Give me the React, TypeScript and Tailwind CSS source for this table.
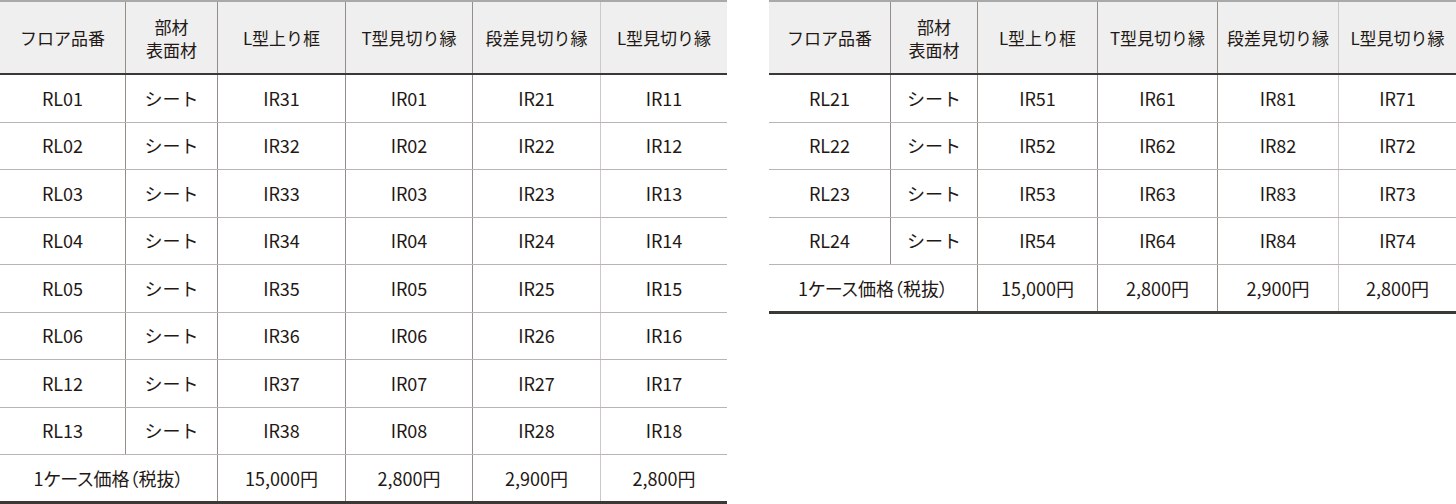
const headers = ['フロア品番', '部材\n表面材', 'L型上り框', 'T型見切り縁', '段差見切り縁', 'L型見切り縁'];

const prices = ['15,000円', '2,800円', '2,900円', '2,800円'];

const leftRows = [
  ['RL01', 'シート', 'IR31', 'IR01', 'IR21', 'IR11'],
  ['RL02', 'シート', 'IR32', 'IR02', 'IR22', 'IR12'],
  ['RL03', 'シート', 'IR33', 'IR03', 'IR23', 'IR13'],
  ['RL04', 'シート', 'IR34', 'IR04', 'IR24', 'IR14'],
  ['RL05', 'シート', 'IR35', 'IR05', 'IR25', 'IR15'],
  ['RL06', 'シート', 'IR36', 'IR06', 'IR26', 'IR16'],
  ['RL12', 'シート', 'IR37', 'IR07', 'IR27', 'IR17'],
  ['RL13', 'シート', 'IR38', 'IR08', 'IR28', 'IR18'],
];

const rightRows = [
  ['RL21', 'シート', 'IR51', 'IR61', 'IR81', 'IR71'],
  ['RL22', 'シート', 'IR52', 'IR62', 'IR82', 'IR72'],
  ['RL23', 'シート', 'IR53', 'IR63', 'IR83', 'IR73'],
  ['RL24', 'シート', 'IR54', 'IR64', 'IR84', 'IR74'],
];

// vertical rule for each column; the last one prints lighter
function sep(i: number) {
  if (i === 0) return '';
  if (i === 5) return 'border-l border-[#cdc9c6]';
  return 'border-l border-[#958d89]';
}

function PriceTable({ rows, grid, width }: { rows: string[][]; grid: string; width: string }) {
  return (
    <div className={`${width} shrink-0`}>
      {/* Header */}
      <div className={`grid ${grid} h-[75px] border-t-2 border-b-2 border-t-[#a9a9a9] border-b-[#3c3836] bg-[#eeefee] text-[17px]`}>
        {headers.map((h, i) => (
          <div key={h} className={`flex items-center justify-center text-center whitespace-pre-line leading-[23px] ${sep(i)}`}>
            {h}
          </div>
        ))}
      </div>

      {/* Body */}
      {rows.map((r) => (
        <div key={r[0]} className={`grid ${grid} h-[47.5px] border-b border-[#bab5b2]`}>
          {r.map((c, i) => (
            <div key={i} className={`flex items-center justify-center ${sep(i)}`}>
              {c}
            </div>
          ))}
        </div>
      ))}

      {/* Price row */}
      <div className={`grid ${grid} h-[49px] border-b-[3px] border-[#3c3836]`}>
        <div className="col-span-2 flex items-center justify-center [font-feature-settings:'palt']">1ケース価格（税抜）</div>
        {prices.map((p, i) => (
          <div key={i} className={`flex items-center justify-center ${sep(i + 2)}`}>
            {p}
          </div>
        ))}
      </div>
    </div>
  );
}

export default function App() {
  return (
    <div className="w-[1456px] h-[504px] bg-white overflow-hidden flex gap-[42px] text-[18px] text-[#231815] font-['Noto_Sans_CJK_JP','Noto_Sans',sans-serif]">
      <PriceTable rows={leftRows} width="w-[727px]" grid="grid-cols-[125px_92px_128px_127px_128px_127px]" />
      <PriceTable rows={rightRows} width="w-[687px]" grid="grid-cols-[121px_87px_120px_120px_121px_118px]" />
    </div>
  );
}
